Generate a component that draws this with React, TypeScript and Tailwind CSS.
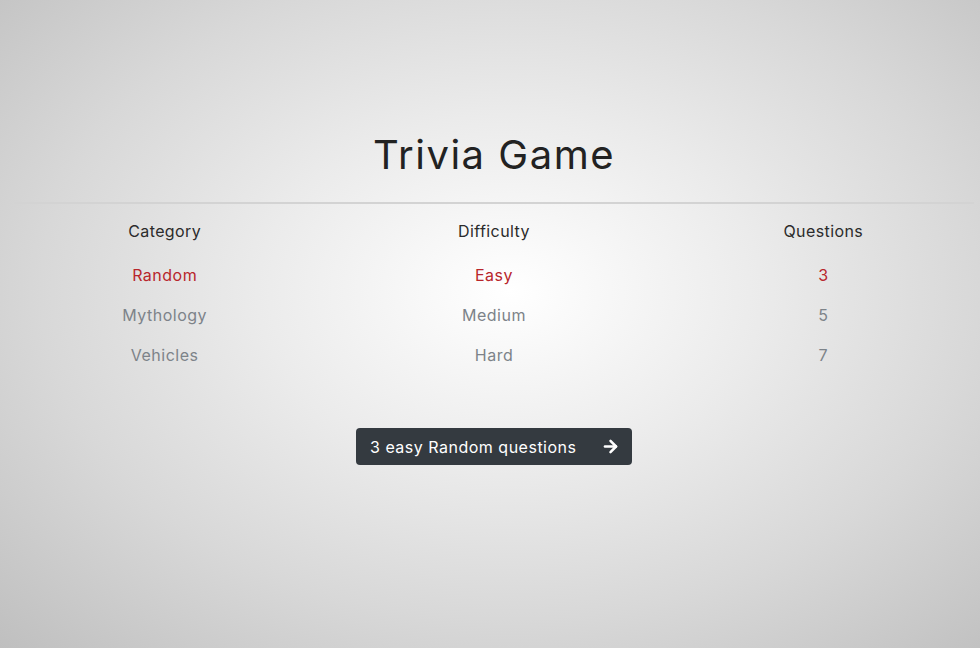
import { ArrowRight } from "lucide-react";

const categories = ["Random", "Mythology", "Vehicles"];
const difficulties = ["Easy", "Medium", "Hard"];
const questions = ["3", "5", "7"];

function Column({ title, items }: { title: string; items: string[] }) {
  return (
    <div className="flex flex-col items-center">
      <div className="h-[24px] leading-[24px] text-[16px] tracking-[0.4px] text-[#2b2b2b]">{title}</div>
      <div className="mt-[12px] flex flex-col items-center">
        {items.map((item, index) => (
          <div
            key={item}
            className={`h-[40px] leading-[40px] text-[16px] tracking-[0.5px] cursor-pointer ${
              index === 0 ? "text-[#b8262c]" : "text-[#7d8389]"
            }`}
          >
            {item}
          </div>
        ))}
      </div>
    </div>
  );
}

export default function App() {
  return (
    <div
      className="w-full h-[648px] overflow-hidden bg-[radial-gradient(ellipse_at_52%_45%,#ffffff_0%,#ebebeb_35%,#d8d8d8_65%,#bfbfbf_100%)]"
      style={{ fontFamily: "Inter, 'Open Sans', sans-serif" }}
    >
      <div className="w-[988px] pt-[131px]">
        <h1 className="text-center text-[40px] leading-[48px] text-[#222] tracking-[1.5px]">
          Trivia Game
        </h1>
        <div className="mt-[23px] mx-[14px] border-t-2 border-[#d3d3d3]" />
        <div className="mt-[15px] grid grid-cols-3">
          <Column title="Category" items={categories} />
          <Column title="Difficulty" items={difficulties} />
          <Column title="Questions" items={questions} />
        </div>
        <div className="mt-[53px] flex justify-center">
          <button
            type="button"
            className="h-[37px] w-[276px] flex items-center justify-between pl-[14px] pr-[12px] rounded-[4px] bg-[#343a40] text-white text-[16px] tracking-[0.5px]"
          >
            <span>3 easy Random questions</span>
            <ArrowRight size={19} strokeWidth={3.2} />
          </button>
        </div>
      </div>
    </div>
  );
}
